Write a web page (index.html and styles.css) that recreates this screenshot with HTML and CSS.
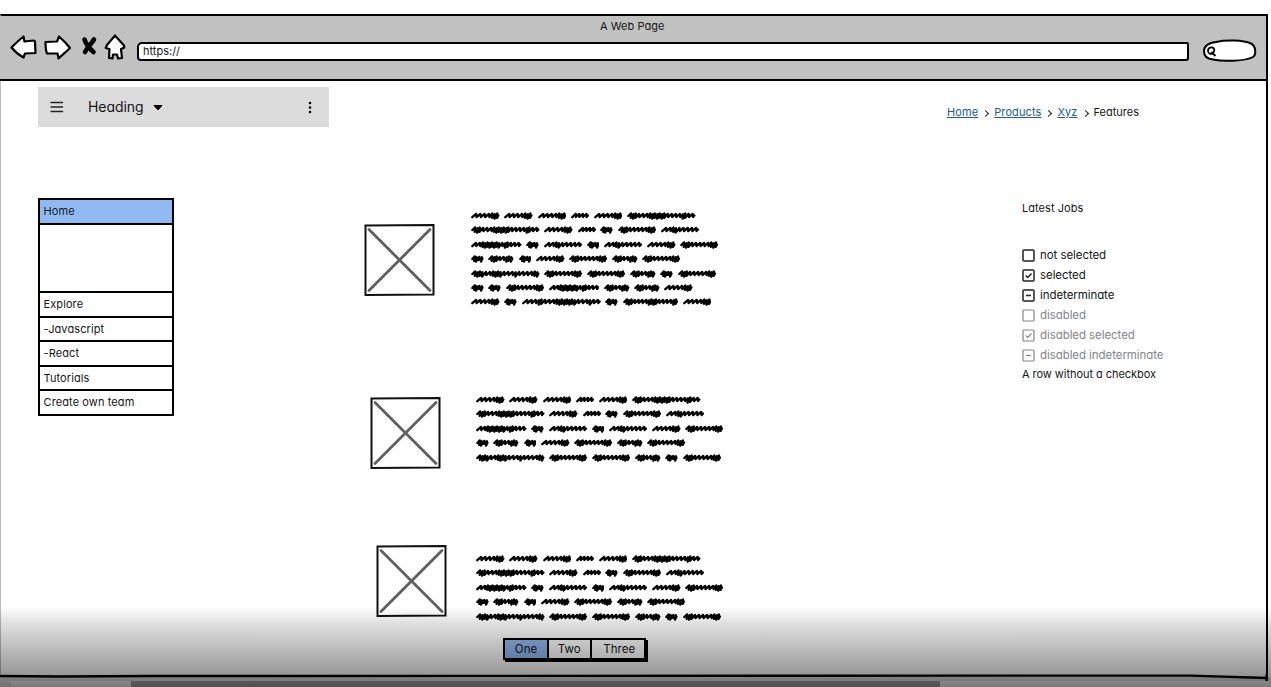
FILE: index.html
```html
<!DOCTYPE html>
<html lang="en">
<head>
<meta charset="utf-8">
<title>A Web Page</title>
<link rel="stylesheet" href="styles.css">
</head>
<body>
<div class="screen">
  <div class="browser">
    <header class="chrome">
      <div class="title">A Web Page</div>
      <div class="toolbar">
        <svg class="nav" width="126" height="36" viewBox="0 0 126 36" fill="#fff" stroke="#000" stroke-width="2.200" stroke-linejoin="round">
          <path d="M11.500 18.500 C15 15 19 11 23.500 7.500 L24.500 12.500 L33.500 11.500 Q35 11.500 35 13 L35.500 24 L25 24.500 L23.500 28.500 C19 26 15 23 11.500 18.500Z"/>
          <path d="M45.500 13 L57 12.500 L59 7.500 C63 11 67 15 70 19 C66 23 62 26 58.500 29.500 L57.500 24.500 L47 24.500 C45.500 21 45.500 17 45.500 13Z"/>
          <path d="M84.500 10.500 C86 15 90 20 93.500 23 M94 10.500 C92 14 87 19 85 23" fill="none" stroke-width="4.600" stroke-linecap="round"/>
          <path d="M115 6.500 L124 16.500 L124.300 18.500 L121 20 L122 29 L118 29.500 L117 25.500 L113 25.500 L112.500 29.500 L109 29 L109.500 20 L105.700 19 L107 16Z"/>
        </svg>
        <div class="address">https://</div>
        <svg class="search" width="56" height="24" viewBox="0 0 56 24" fill="#fff" stroke="#000" stroke-width="2">
          <path d="M2 12 C2 6 7 4 14 3 C24 0.800 41 1 49 4.500 C54 7 54.500 16 51 18 C43 22.500 20 22.500 11 20.500 C5 20 2 17 2 12Z"/>
          <path d="M12 14 C8 16 5.500 14 6 11 C7 7.500 12 7.500 12.300 11 C12.400 13 11 14 9 13.500 M10.500 14 L13.500 17" fill="none" stroke-width="1.800"/>
        </svg>
      </div>
    </header>

    <main class="page">
      <div class="top">
        <div class="appbar">
          <svg width="14" height="12" viewBox="0 0 14 12" stroke="#222" stroke-width="1.400" stroke-linecap="round"><path d="M1 1.500H12.500M1 6H12.500M1 10.500H12.500"/></svg>
          <span class="heading">Heading</span>
          <svg class="caret" width="10" height="7" viewBox="0 0 10 7"><path d="M1 1.500H9L5 6Z" stroke="#000" stroke-linejoin="round"/></svg>
          <svg class="dots" width="4" height="13" viewBox="0 0 4 13"><circle cx="2" cy="2" r="1.300"/><circle cx="2" cy="6.500" r="1.300"/><circle cx="2" cy="11" r="1.300"/></svg>
        </div>
        <nav class="crumbs"><a>Home</a><i></i><a>Products</a><i></i><a>Xyz</a><i></i><span>Features</span></nav>
      </div>

      <div class="columns">
        <ul class="menu">
          <li class="active">Home</li>
          <li class="blank"></li>
          <li>Explore</li>
          <li>-Javascript</li>
          <li>-React</li>
          <li>Tutorials</li>
          <li>Create own team</li>
        </ul>

        <div class="feed">
          <article class="first">
            <svg class="picture" width="71" height="72" viewBox="0 0 71 72" fill="#fff"><path d="M1.500 1.500L69.500 1L69.500 70.500L1.500 71Z" stroke="#111" stroke-width="2"/><path d="M5 5.500L66 66.500M66 5.500L5 66.500" stroke="#606060" stroke-width="2.800" stroke-linecap="round"/></svg>
            <div class="lines" data-lines="7"></div>
          </article>
          <article class="second">
            <svg class="picture" width="71" height="72" viewBox="0 0 71 72" fill="#fff"><path d="M1.500 1.500L69.500 1L69.500 70.500L1.500 71Z" stroke="#111" stroke-width="2"/><path d="M5 5.500L66 66.500M66 5.500L5 66.500" stroke="#606060" stroke-width="2.800" stroke-linecap="round"/></svg>
            <div class="lines" data-lines="5"></div>
          </article>
          <article class="third">
            <svg class="picture" width="71" height="72" viewBox="0 0 71 72" fill="#fff"><path d="M1.500 1.500L69.500 1L69.500 70.500L1.500 71Z" stroke="#111" stroke-width="2"/><path d="M5 5.500L66 66.500M66 5.500L5 66.500" stroke="#606060" stroke-width="2.800" stroke-linecap="round"/></svg>
            <div class="lines" data-lines="5"></div>
          </article>
          <div class="pager"><span class="on">One</span><span>Two</span><span>Three</span></div>
        </div>

        <aside class="jobs">
          <h2>Latest Jobs</h2>
          <div class="row"><svg class="box" viewBox="0 0 13 13"><rect x="1" y="1" width="11" height="11" rx="1"/></svg><span>not selected</span></div>
          <div class="row"><svg class="box" viewBox="0 0 13 13"><rect x="1" y="1" width="11" height="11" rx="1"/><path d="M3.700 6.500L5.700 8.500L9.500 4.500"/></svg><span>selected</span></div>
          <div class="row"><svg class="box" viewBox="0 0 13 13"><rect x="1" y="1" width="11" height="11" rx="1"/><path d="M4 6.500H9"/></svg><span>indeterminate</span></div>
          <div class="row off"><svg class="box" viewBox="0 0 13 13"><rect x="1" y="1" width="11" height="11" rx="1"/></svg><span>disabled</span></div>
          <div class="row off"><svg class="box" viewBox="0 0 13 13"><rect x="1" y="1" width="11" height="11" rx="1"/><path d="M3.700 6.500L5.700 8.500L9.500 4.500"/></svg><span>disabled selected</span></div>
          <div class="row off"><svg class="box" viewBox="0 0 13 13"><rect x="1" y="1" width="11" height="11" rx="1"/><path d="M4 6.500H9"/></svg><span>disabled indeterminate</span></div>
          <div class="plain">A row without a checkbox</div>
        </aside>
      </div>
    </main>
  </div>
  <svg class="floor" width="1271" height="8" viewBox="0 0 1271 8" fill="none" stroke="#000" stroke-width="2.400"><path d="M0 2 L60 2.500 L150 2 L1190 1.600 L1267 4 M1266.700 0V7" /></svg>
  <div class="scroll"><span class="corner"></span><span class="thumb"></span><span class="track"></span></div>
  <div class="shade"></div>
</div>
<script src="scribble.js"></script>
</body>
</html>
```
FILE: styles.css
```css
* { box-sizing: border-box; }
body { margin: 0; background: #fff; color: #161616; font: 11px/14px Inter, "Liberation Sans", sans-serif; font-feature-settings: "cv11"; }
svg { display: block; flex: none; }
.screen { position: relative; width: 1271px; height: 687px; padding-top: 14px; overflow: hidden; }
.browser { width: 1268px; height: 660px; border: solid #000; border-width: 2px 2.500px 0 0; border-left: 1px solid #bbb; }
.chrome { height: 65px; margin-left: -1px; background: #c1c1c1; border-bottom: 2px solid #000; }
.title { height: 18px; padding: 3px 0 0 600px; letter-spacing: .05px; }
.toolbar { display: flex; align-items: flex-start; }
.nav { margin-top: -5px; }
.address { width: 1052px; height: 19px; margin: 8px 14px 0 11px; padding: 0 0 0 4px; line-height: 15px; background: #fff; border: 2px solid #000; border-radius: 5px 2px 3px 4px; }
.search { margin-top: 5px; margin-left: -1px; }
.page { height: 593px; }
.top { display: flex; height: 117px; padding: 6px 0 0 37px; }
.appbar { display: flex; align-items: center; width: 291px; height: 40px; padding: 0 17px 0 12px; background: #dcdcdc; }
.heading { margin-left: 24px; font-size: 14px; letter-spacing: -.05px; }
.caret { margin-left: 9px; }
.dots { margin-left: auto; }
.crumbs { display: flex; align-items: flex-start; padding: 18px 0 0 618px; white-space: nowrap; }
.crumbs a { color: #245c8c; text-decoration: underline; text-underline-offset: 1px; letter-spacing: .1px; }
.crumbs i { width: 5px; height: 5px; margin: 6px 6px 0 5px; border: solid #222; border-width: 1.500px 1.500px 0 0; transform: rotate(45deg); }
.columns { display: flex; align-items: flex-start; padding-left: 37px; }
.menu { width: 136px; margin: 0; padding: 0; list-style: none; border: 2px solid #000; border-top: 0; }
.menu li { height: 24.500px; padding: 4px 0 0 3.500px; border-top: 2px solid #000; white-space: nowrap; letter-spacing: .1px; }
.menu .active { background: #91b9f2; }
.menu .blank { height: 68.500px; }
.feed { width: 658px; margin-left: 190px; }
.feed article { display: flex; align-items: flex-start; }
.first { height: 188px; padding-top: 12px; }
.picture { margin-top: 14px; }
.lines { margin-left: 36px; }
.second { height: 159px; padding-left: 6px; }
.second .picture { margin-top: 11px; }
.second .lines { margin-left: 35px; margin-top: 8px; }
.third { height: 93px; padding-left: 12px; }
.third .picture { margin-top: 0; }
.third .lines { margin-left: 29px; margin-top: 8px; }
.line { display: flex; gap: 4.600px; height: 14.400px; }
.scribble { fill: none; stroke: #000; stroke-width: 2.300px; stroke-linecap: round; stroke-linejoin: round; }
.pager { display: flex; width: 143px; height: 22px; margin-left: 139px; border: 2px solid #000; background: #fff; box-shadow: 2px 2px 0 #000; }
.pager span { width: 42.500px; padding-top: 2px; text-align: center; font-size: 11.500px; line-height: 15px; border-right: 2px solid #000; }
.pager .on { width: 44px; background: #91b9f2; }
.pager span:last-child { flex: 1; border: 0; padding-left: 3px; }
.jobs { padding-top: 3px; white-space: nowrap; }
.jobs h2 { margin: 0 0 30px; font: inherit; letter-spacing: .05px; }
.row { display: flex; align-items: center; height: 20px; gap: 5px; font-size: 11.500px; letter-spacing: -.07px; }
.plain { margin-top: 2px; letter-spacing: -.05px; }
.box { width: 13px; height: 13px; fill: none; stroke: #222; stroke-width: 1.500px; }
.off { color: #858589; }
.off .box { stroke: #858589; stroke-width: 1.200px; }
.floor { background: linear-gradient(transparent 3px, #e4e4e4 3px); }
.scroll { display: flex; height: 6px; margin-top: -1px; background: #fff; }
.corner { width: 11px; background: #ececec; }
.thumb { width: 120px; }
.track { width: 809px; background: #a8a8a8; }
.shade { position: absolute; left: 0; right: 0; top: 607px; bottom: 0; background: linear-gradient(rgba(0,0,0,0), rgba(0,0,0,.12) 20%, rgba(0,0,0,.4) 83%, rgba(0,0,0,.52)); }
```
FILE: scribble.js
```javascript
// Word shapes: width in px and stroke rhythm ("w" = wide swing, "n" = narrow swing).
const shapes = {
  A: [28.7, "wwwwnnn"], B: [18.3, "wwww"], C: [68.7, "nnnwwwnnnnnnnwwwwnnww"], D: [12.8, "nnwn"],
  E: [38.3, "nnnwwwwwnnn"], F: [38.3, "wwnnwwwww"], G: [50.7, "wwnnnnnnnnwnnwww"], H: [25.6, "nnnwwnnn"],
  I: [68.7, "nnnnwwnnnnwwwnwwwwnn"], J: [79, "wwwnnwwwnnnnnnnnwwwnww"], K: [55.3, "nnnwwwwnnnnwwwwnn"]
};
const text = ["AAABAC", "CABDEF", "GDFDFAE", "DHDAEHE", "IEEHDE", "DDEGHHA", "ADJDKA"];

function word(key) {
  const [width, rhythm] = shapes[key];
  const size = c => (c === "w" ? 1.7 : 1);
  const total = [...rhythm].reduce((sum, c) => sum + size(c), 0);
  const unit = (width - 4) / total;
  let x = 1.3;
  let d = rhythm[0] === "w" ? "M1.3 7.2" : "M1.3 6";
  [...rhythm].forEach((c, i) => {
    const step = size(c) * unit;
    const top = c === "w" ? 3.9 : 3.4 + (i % 2) * 0.8;
    const low = c === "w" ? 7 : 7.9 + (i % 2) * 0.7;
    d += ` L${(x + step * 0.55 + 1.5).toFixed(1)} ${top} L${(x + step).toFixed(1)} ${low}`;
    x += step;
  });
  d += ` L${(width - 1.3).toFixed(1)} 5.5`;
  return `<svg class="scribble" width="${width}" height="12" viewBox="0 0 ${width} 12"><path d="${d}"/></svg>`;
}

document.querySelectorAll(".lines").forEach(block => {
  block.innerHTML = text.slice(0, Number(block.dataset.lines))
    .map(row => `<div class="line">${[...row].map(word).join("")}</div>`).join("");
});
```
